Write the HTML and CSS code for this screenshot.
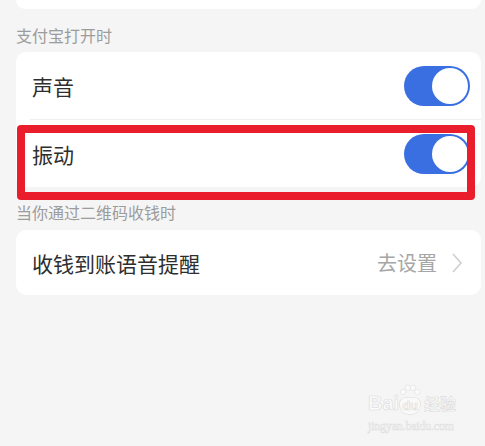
FILE: index.html
```html
<!DOCTYPE html>
<html lang="zh">
<head>
<meta charset="utf-8">
<link rel="stylesheet" href="styles.css">
</head>
<body>
<div class="page">
  <div class="card card-top"></div>
  <div class="label label-first">支付宝打开时</div>
  <div class="card">
    <div class="row">
      <span class="row-title">声音</span>
      <span class="switch"><span class="knob"></span></span>
    </div>
    <div class="sep"></div>
    <div class="row row-marked">
      <span class="row-title">振动</span>
      <span class="switch"><span class="knob"></span></span>
      <div class="mark"></div>
    </div>
  </div>
  <div class="label label-second">当你通过二维码收钱时</div>
  <div class="card">
    <div class="row row-link">
      <span class="row-title">收钱到账语音提醒</span>
      <span class="row-action">去设置
        <svg class="chev" width="12" height="22" viewBox="0 0 12 22"><polyline points="2,2 10,11 2,20" fill="none" stroke="#cfcfcf" stroke-width="1.6"/></svg>
      </span>
    </div>
  </div>
  <div class="watermark">
    <div class="wm-logo">
      <span class="wm-bai">Bai</span>
      <span class="wm-du">
        <svg class="paw" width="24" height="16" viewBox="0 0 28 18">
          <circle cx="6" cy="9" r="3.2"/><circle cx="11.5" cy="4" r="3.2"/><circle cx="17.5" cy="4" r="3.2"/><circle cx="22.5" cy="9" r="3.2"/>
        </svg>
        du</span>
      <span class="wm-jy">经验</span>
    </div>
    <div class="wm-url">jingyan.baidu.com</div>
  </div>
</div>
</body>
</html>
```
FILE: styles.css
```css
html, body {
  margin: 0;
  padding: 0;
  background: #f5f5f5;
}
body {
  font-family: "Noto Sans CJK SC", "Noto Sans", sans-serif;
  color: #333;
}
.page {
  position: relative;
  height: 446px;
  padding: 0 4px 0 16px;
  overflow: hidden;
}
.card {
  background: #fff;
  border-radius: 10px;
}
.card-top {
  height: 9px;
  border-radius: 0 0 10px 10px;
}
.label {
  font-size: 16px;
  line-height: 22px;
  color: #9c9c9c;
}
.label-first {
  padding: 15px 0 6px 0;
}
.label-second {
  padding: 14px 0 7px 0;
}
.row {
  position: relative;
  display: flex;
  align-items: center;
  justify-content: space-between;
  height: 67px;
  padding: 0 11px 0 16px;
}
.row-title {
  font-size: 21px;
  line-height: 28px;
  color: #2e2e2e;
}
.sep {
  height: 1px;
  margin-left: 14px;
  background: #f0f0f0;
}
.switch {
  box-sizing: border-box;
  width: 66px;
  height: 40px;
  padding: 2px;
  border-radius: 20px;
  background: #3a6fe2;
  display: flex;
  justify-content: flex-end;
}
.knob {
  width: 36px;
  height: 36px;
  border-radius: 50%;
  background: #fff;
}
.mark {
  position: absolute;
  top: 5px;
  left: 1px;
  right: 6px;
  bottom: -13px;
  border: 8px solid #e91d2b;
  border-radius: 4px;
}
.row-link {
  height: 65px;
  padding-right: 18px;
}
.row-action {
  display: flex;
  align-items: center;
  gap: 14px;
  font-size: 20px;
  color: #a6a6a6;
}
.chev {
  display: block;
}
.watermark {
  position: absolute;
  left: 368px;
  top: 392px;
  color: #fafafa;
}
.wm-logo {
  display: flex;
  align-items: flex-end;
  font-family: "Liberation Sans", sans-serif;
  font-weight: bold;
  font-size: 20px;
  line-height: 22px;
  -webkit-text-stroke: 0.6px #dcdcdc;
}
.wm-du {
  position: relative;
  font-size: 13px;
  line-height: 16px;
  padding: 0 2px;
  margin: 0 1px;
  border-radius: 5px 5px 8px 8px;
  background: #f9f9f9;
  box-shadow: 0 0 0 0.6px #dcdcdc;
}
.paw {
  position: absolute;
  left: -2px;
  top: -14px;
  fill: #fafafa;
  stroke: #dcdcdc;
  stroke-width: 0.6;
}
.wm-jy {
  font-family: "Noto Sans CJK SC", sans-serif;
  font-size: 16px;
  font-weight: bold;
  margin-left: 3px;
}
.wm-url {
  font-family: "Liberation Serif", serif;
  font-size: 12px;
  line-height: 14px;
  margin-top: 5px;
  letter-spacing: -0.2px;
  -webkit-text-stroke: 0.5px #dedede;
}
```
